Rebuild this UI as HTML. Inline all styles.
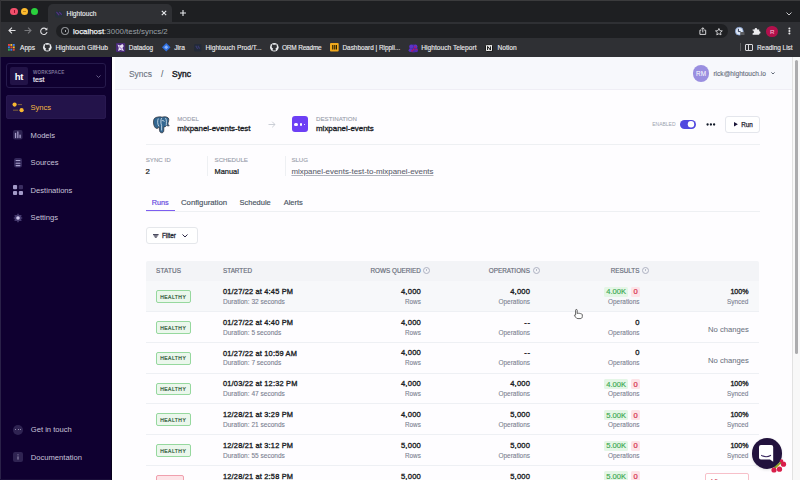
<!DOCTYPE html>
<html><head><meta charset="utf-8">
<style>
*{box-sizing:border-box;margin:0;padding:0}
html,body{width:800px;height:480px;overflow:hidden;background:#fff;font-family:"Liberation Sans",sans-serif}
.a{position:absolute;white-space:nowrap}
svg.a{overflow:visible}
</style></head><body>
<div class="a" style="left:0.00px;top:0.00px;width:800.00px;height:57.00px;background:#2f3034;"></div>
<div class="a" style="left:0.00px;top:0.00px;width:800.00px;height:22.00px;background:#1e1f22;"></div>
<div class="a" style="left:0.00px;top:0.00px;width:800.00px;height:1.00px;background:#3b3b3d;"></div>
<div class="a" style="left:0.00px;top:0.00px;width:1.00px;height:57.00px;background:#333336;"></div>
<div class="a" style="left:10.40px;top:7.70px;width:7.4px;height:7.4px;border-radius:50%;background:#f14f6b"></div>
<div class="a" style="left:20.60px;top:7.70px;width:7.4px;height:7.4px;border-radius:50%;background:#fdbb2e"></div>
<div class="a" style="left:30.70px;top:7.70px;width:7.4px;height:7.4px;border-radius:50%;background:#2ad13d"></div>
<div class="a" style="left:13.50px;top:9.60px;width:1.10px;height:3.80px;background:#9a1030;"></div>
<div class="a" style="left:22.90px;top:11.00px;width:2.80px;height:0.90px;background:#9a6010;opacity:.6"></div>
<div class="a" style="left:48.00px;top:4.00px;width:124.00px;height:18.00px;background:#2f3034;border-radius:5px 5px 0 0"></div>
<svg class="a" style="left:54.70px;top:10.80px;" width="8" height="6.4" viewBox="0 0 8 6.4"><rect width="8" height="6.4" rx="2" fill="#25303a"/><path d="M1.8 1.3 L3.9 3.9 M4.6 1.3 L6.4 3.4" stroke="#56308a" stroke-width="1.1" stroke-linecap="round"/></svg>
<div class="a" style="top:10.00px;font-size:6.65px;line-height:7.98px;color:#eceef0;-webkit-text-stroke:0.12px #eceef0;left:66.60px;">Hightouch</div>
<svg class="a" style="left:160.50px;top:10.10px;" width="6" height="6" viewBox="0 0 6 6"><path d="M0.8 0.8 L5.2 5.2 M5.2 0.8 L0.8 5.2" stroke="#e8eaed" stroke-width="1.1"/></svg>
<svg class="a" style="left:179.60px;top:10.00px;" width="6" height="6" viewBox="0 0 6 6"><path d="M3 0 V6 M0 3 H6" stroke="#e8eaed" stroke-width="1.1"/></svg>
<svg class="a" style="left:786.00px;top:11.50px;" width="6" height="4" viewBox="0 0 6 4"><path d="M0.5 0.5 L3 3 L5.5 0.5" stroke="#c8c8cc" stroke-width="1" fill="none"/></svg>
<svg class="a" style="left:7.50px;top:27.00px;" width="8" height="7" viewBox="0 0 8 7"><path d="M7.5 3.5 H1 M4 0.6 L1 3.5 L4 6.4" stroke="#e0e0e3" stroke-width="1.1" fill="none"/></svg>
<svg class="a" style="left:24.00px;top:27.00px;" width="8" height="7" viewBox="0 0 8 7"><path d="M0.5 3.5 H7 M4 0.6 L7 3.5 L4 6.4" stroke="#77787c" stroke-width="1.1" fill="none"/></svg>
<svg class="a" style="left:40.00px;top:26.50px;" width="8" height="8" viewBox="0 0 8 8"><path d="M6.6 2.6 A3.2 3.2 0 1 0 7 5" stroke="#e0e0e3" stroke-width="1.1" fill="none"/><path d="M7.4 0.6 V3.2 H4.8 Z" fill="#e0e0e3"/></svg>
<div class="a" style="left:56.00px;top:23.80px;width:672.00px;height:13.90px;background:#1e1f22;border-radius:7px"></div>
<div class="a" style="left:61.4px;top:27.4px;width:7.2px;height:7.2px;border:0.9px solid #a9acb1;border-radius:50%"></div>
<div class="a" style="left:64.55px;top:29.90px;width:0.90px;height:2.60px;background:#a9acb1;"></div>
<div class="a" style="top:27.00px;font-size:7.9px;line-height:9.48px;color:#eef0f2;-webkit-text-stroke:0.25px #eef0f2;left:73.00px;">localhost<span style="color:#9aa0a6;-webkit-text-stroke:0">:3000/test/syncs/2</span></div>
<svg class="a" style="left:699.00px;top:27.30px;" width="7.6" height="8" viewBox="0 0 7.6 8"><path d="M2.3 3.2 H0.9 V7.4 H6.7 V3.2 H5.3 M3.8 5.4 V0.9 M2.2 2.3 L3.8 0.7 L5.4 2.3" stroke="#d4d4d7" stroke-width="1" fill="none"/></svg>
<svg class="a" style="left:714.80px;top:27.50px;" width="7.8" height="7.4" viewBox="0 0 7.8 7.4"><path d="M3.9 0.5 L4.9 2.7 L7.3 2.9 L5.5 4.5 L6 6.9 L3.9 5.7 L1.8 6.9 L2.3 4.5 L0.5 2.9 L2.9 2.7 Z" stroke="#d4d4d7" stroke-width="0.95" fill="none" stroke-linejoin="round"/></svg>
<svg class="a" style="left:735.00px;top:27.00px;" width="10" height="8.5" viewBox="0 0 10 8.5"><circle cx="4.3" cy="4.2" r="3.9" fill="#dfe8f5" stroke="#7d9bd0" stroke-width="0.8"/><path d="M3.4 1.8 V4.6 H5.6" stroke="#2e3a55" stroke-width="1" fill="none"/><rect x="5.2" y="5" width="4.3" height="3" rx="0.6" fill="#5b5c60"/></svg>
<svg class="a" style="left:751.60px;top:26.80px;" width="9" height="8" viewBox="0 0 9 8"><path d="M0.6 2.4 H2.6 A1.3 1.3 0 1 1 5.2 2.4 H7.2 V4.2 A1.3 1.3 0 1 1 7.2 6.8 V7.8 H0.6 V6.2 A1.3 1.3 0 1 0 0.6 3.6 Z" fill="#ececef"/></svg>
<div class="a" style="left:766.3px;top:25.5px;width:11.8px;height:11.8px;border-radius:50%;background:#b3104c"></div>
<div class="a" style="top:28.00px;font-size:6.2px;line-height:7.44px;color:#f2b6cc;-webkit-text-stroke:0.1px #f2b6cc;left:572.20px;width:400px;text-align:center;">R</div>
<svg class="a" style="left:787.50px;top:27.00px;" width="3" height="8" viewBox="0 0 3 8"><circle cx="1.4" cy="1.5" r="1.05" fill="#e8e8ea"/><circle cx="1.4" cy="4" r="1.05" fill="#e8e8ea"/><circle cx="1.4" cy="6.5" r="1.05" fill="#e8e8ea"/></svg>
<svg class="a" style="left:8.00px;top:44.00px;" width="7" height="7" viewBox="0 0 7 7"><rect x="0.0" y="0.0" width="1.9" height="1.9" fill="#e8453c"/><rect x="2.4" y="0.0" width="1.9" height="1.9" fill="#f9bb2d"/><rect x="4.8" y="0.0" width="1.9" height="1.9" fill="#3b7ded"/><rect x="0.0" y="2.4" width="1.9" height="1.9" fill="#3b7ded"/><rect x="2.4" y="2.4" width="1.9" height="1.9" fill="#e8453c"/><rect x="4.8" y="2.4" width="1.9" height="1.9" fill="#f9bb2d"/><rect x="0.0" y="4.8" width="1.9" height="1.9" fill="#34a853"/><rect x="2.4" y="4.8" width="1.9" height="1.9" fill="#3b7ded"/><rect x="4.8" y="4.8" width="1.9" height="1.9" fill="#e8453c"/></svg>
<div class="a" style="top:44.00px;font-size:6.6px;line-height:7.92px;color:#ececee;-webkit-text-stroke:0.12px #ececee;left:20.00px;">Apps</div>
<svg class="a" style="left:43.20px;top:43.20px;" width="8.6" height="8.6" viewBox="0 0 8.6 8.6"><circle cx="4.3" cy="4.3" r="4.3" fill="#e8eaed"/><path d="M2.6 7.6 C2.6 6 3 5.6 3.3 5.4 C2 5.2 1.7 4.4 1.7 3.5 C1.7 3 1.9 2.6 2.1 2.3 C2 2 2 1.6 2.2 1.3 C2.6 1.3 3 1.6 3.3 1.8 C3.9 1.6 4.7 1.6 5.3 1.8 C5.6 1.6 6 1.3 6.4 1.3 C6.6 1.6 6.6 2 6.5 2.3 C6.7 2.6 6.9 3 6.9 3.5 C6.9 4.4 6.6 5.2 5.3 5.4 C5.6 5.6 5.9 6 5.9 7.6 Z" fill="#2f3034"/></svg>
<div class="a" style="top:44.00px;font-size:6.65px;line-height:7.98px;color:#ececee;-webkit-text-stroke:0.12px #ececee;left:55.50px;">Hightouch GitHub</div>
<svg class="a" style="left:115.80px;top:43.00px;" width="9.2" height="9" viewBox="0 0 9.2 9"><rect x="0" y="0" width="9.2" height="9" rx="1" fill="#4a2a7a"/><path d="M1.5 1.5 L4 2.5 L6.5 1 L7.8 3 L6.5 5 L8 8 L4.5 7 L2 8 L2.8 5 Z" fill="#e8e0f5"/><path d="M3 3.5 L6 6.5" stroke="#8050c0" stroke-width="0.9"/></svg>
<div class="a" style="top:44.00px;font-size:6.45px;line-height:7.74px;color:#ececee;-webkit-text-stroke:0.12px #ececee;left:128.75px;">Datadog</div>
<svg class="a" style="left:162.00px;top:43.30px;" width="8.5" height="8.5" viewBox="0 0 8.5 8.5"><path d="M4.25 0 L8.5 4.25 L4.25 8.5 L0 4.25 Z" fill="#2f6fe0"/><path d="M4.25 2.2 L6.3 4.25 L4.25 6.3 L2.2 4.25 Z" fill="#8fb4f5"/></svg>
<div class="a" style="top:44.00px;font-size:6.65px;line-height:7.98px;color:#ececee;-webkit-text-stroke:0.12px #ececee;left:174.25px;">Jira</div>
<svg class="a" style="left:193.75px;top:43.50px;" width="7.5" height="8" viewBox="0 0 7.5 8"><rect width="7.5" height="7.5" rx="1.5" fill="#232a38"/><path d="M1.8 1.8 L3.6 5 M3.9 1.8 L5.6 4.6" stroke="#3a3a70" stroke-width="1.1"/></svg>
<div class="a" style="top:44.00px;font-size:6.6px;line-height:7.92px;color:#ececee;-webkit-text-stroke:0.12px #ececee;left:205.50px;">Hightouch Prod/T...</div>
<svg class="a" style="left:270.00px;top:43.20px;" width="8.6" height="8.6" viewBox="0 0 8.6 8.6"><circle cx="4.3" cy="4.3" r="4.3" fill="#e8eaed"/><path d="M2.6 7.6 C2.6 6 3 5.6 3.3 5.4 C2 5.2 1.7 4.4 1.7 3.5 C1.7 3 1.9 2.6 2.1 2.3 C2 2 2 1.6 2.2 1.3 C2.6 1.3 3 1.6 3.3 1.8 C3.9 1.6 4.7 1.6 5.3 1.8 C5.6 1.6 6 1.3 6.4 1.3 C6.6 1.6 6.6 2 6.5 2.3 C6.7 2.6 6.9 3 6.9 3.5 C6.9 4.4 6.6 5.2 5.3 5.4 C5.6 5.6 5.9 6 5.9 7.6 Z" fill="#2f3034"/></svg>
<div class="a" style="top:44.00px;font-size:6.5px;line-height:7.8px;color:#ececee;letter-spacing:-0.2px;-webkit-text-stroke:0.12px #ececee;left:282.00px;">ORM Readme</div>
<svg class="a" style="left:330.00px;top:43.30px;" width="8.7" height="8.5" viewBox="0 0 8.7 8.5"><rect width="8.7" height="8.5" rx="1" fill="#f0a81c"/><rect x="2.2" y="2" width="1.2" height="4.5" fill="#2b2000"/><rect x="4.2" y="2" width="1.2" height="4.5" fill="#2b2000"/><rect x="6" y="2" width="1" height="4.5" fill="#2b2000"/></svg>
<div class="a" style="top:44.00px;font-size:6.4px;line-height:7.68px;color:#ececee;-webkit-text-stroke:0.12px #ececee;left:342.50px;">Dashboard | Rippli...</div>
<svg class="a" style="left:408.00px;top:43.50px;" width="11" height="9" viewBox="0 0 11 9"><circle cx="5.5" cy="4.5" r="4" fill="#4b2aa8"/><circle cx="3.2" cy="2.6" r="2" fill="#5a34c8"/><circle cx="7.6" cy="2.4" r="1.8" fill="#5a34c8"/><circle cx="2.4" cy="6.2" r="1.8" fill="#5a34c8"/><circle cx="8.2" cy="6.4" r="1.8" fill="#4f2cb8"/><circle cx="7.2" cy="3.2" r="0.9" fill="#c0155a"/><circle cx="5.6" cy="5.5" r="0.9" fill="#c0155a"/><circle cx="8.5" cy="5.5" r="0.8" fill="#c0155a"/><circle cx="4" cy="6.8" r="0.9" fill="#c0155a"/></svg>
<div class="a" style="top:44.00px;font-size:6.65px;line-height:7.98px;color:#ececee;-webkit-text-stroke:0.12px #ececee;left:421.25px;">Hightouch Teleport</div>
<svg class="a" style="left:485.10px;top:43.80px;" width="8" height="8" viewBox="0 0 8 8"><path d="M1.2 0.8 L6.6 0.6 L7.5 1.6 V7.3 L1.6 7.5 L0.5 6.3 V1.6 Z" fill="#f2f2f2" stroke="#0a0a0a" stroke-width="0.9"/><path d="M2.6 6 V2.4 L5.4 6 V2.4" stroke="#111" stroke-width="1" fill="none"/></svg>
<div class="a" style="top:44.00px;font-size:6.65px;line-height:7.98px;color:#ececee;-webkit-text-stroke:0.12px #ececee;left:497.50px;">Notion</div>
<div class="a" style="left:739.50px;top:43.30px;width:1.00px;height:8.20px;background:#5a5b5e;"></div>
<div class="a" style="left:744.8px;top:44px;width:8.2px;height:7.4px;border:1px solid #d8d8db;border-radius:1px"></div>
<div class="a" style="left:748.40px;top:44.50px;width:1.00px;height:6.50px;background:#d8d8db;"></div>
<div class="a" style="top:44.00px;font-size:6.4px;line-height:7.68px;color:#ececee;-webkit-text-stroke:0.12px #ececee;left:757.00px;">Reading List</div>
<div class="a" style="left:0.00px;top:57.00px;width:112.00px;height:423.00px;background:#0f0030;"></div>
<div class="a" style="left:111.00px;top:57.00px;width:1.00px;height:423.00px;background:#07001c;"></div>
<div class="a" style="left:0.00px;top:57.00px;width:1.00px;height:423.00px;background:#2a2148;"></div>
<div class="a" style="left:0.00px;top:479.00px;width:111.00px;height:1.00px;background:#1a0e3a;"></div>
<div class="a" style="left:6.2px;top:63.2px;width:99.9px;height:25.2px;border:1px solid #261a4c;border-radius:3px"></div>
<div class="a" style="left:10.00px;top:67.00px;width:18.00px;height:18.00px;background:#221347;border-radius:2px"></div>
<div class="a" style="top:71.00px;font-size:9.5px;line-height:11.4px;color:#ffffff;font-weight:700;letter-spacing:-0.3px;left:-181.00px;width:400px;text-align:center;">ht</div>
<div class="a" style="top:70.00px;font-size:4.6px;line-height:5.52px;color:#7a7196;font-weight:700;letter-spacing:0.15px;left:33.00px;">WORKSPACE</div>
<div class="a" style="top:76.00px;font-size:7.2px;line-height:8.64px;color:#f2f0f7;-webkit-text-stroke:0.15px #f2f0f7;left:33.00px;">test</div>
<svg class="a" style="left:95.50px;top:75.00px;" width="5" height="3" viewBox="0 0 5 3"><path d="M0.5 0.5 L2.5 2.5 L4.5 0.5" stroke="#6f6690" stroke-width="0.9" fill="none"/></svg>
<div class="a" style="left:6.40px;top:95.00px;width:99.70px;height:23.60px;background:#23134a;border-radius:3px;box-shadow:inset 0 0 0 0.8px #2b1b52"></div>
<svg class="a" style="left:12.00px;top:101.50px;" width="12" height="11" viewBox="0 0 12 11"><circle cx="2.6" cy="2.6" r="2.1" fill="#f7b731"/><circle cx="9.6" cy="8.2" r="2.1" fill="#f7b731"/><path d="M5.8 2.6 H10 M1 8.2 H6.2" stroke="#8a6a3a" stroke-width="0.9"/></svg>
<div class="a" style="top:103.00px;font-size:7.6px;line-height:9.12px;color:#f4b942;left:30.40px;">Syncs</div>
<svg class="a" style="left:13.20px;top:130.20px;" width="9.6" height="9.6" viewBox="0 0 9.6 9.6"><rect width="9.6" height="9.6" rx="2" fill="#2e2352"/><path d="M2.55 7.5 V3.3 M4.85 7.5 V1.9 M7.1 7.5 V5.1" stroke="#a59cc8" stroke-width="1.3" stroke-linecap="round"/></svg>
<div class="a" style="top:131.00px;font-size:7.6px;line-height:9.12px;color:#c9c4da;left:30.60px;">Models</div>
<svg class="a" style="left:14.00px;top:157.80px;" width="8" height="9.5" viewBox="0 0 8 9.5"><rect width="8" height="9.5" rx="2" fill="#33275a"/><path d="M2.1 2.5 H5.9 M2.1 5.2 H5.9 M2.1 7.6 H5.9" stroke="#a8a0cc" stroke-width="1.1" stroke-linecap="round"/></svg>
<div class="a" style="top:158.00px;font-size:7.6px;line-height:9.12px;color:#c9c4da;left:30.60px;">Sources</div>
<svg class="a" style="left:13.20px;top:185.00px;" width="10" height="10" viewBox="0 0 10 10"><rect x="0" y="0" width="4.1" height="4.2" rx="1" fill="#a39ac8"/><rect x="5.8" y="0" width="4.2" height="4.2" rx="1" fill="#3a2d60"/><rect x="0" y="6" width="4.1" height="4" rx="1" fill="#a39ac8"/><rect x="5.8" y="6" width="4.2" height="4" rx="1" fill="#a39ac8"/></svg>
<div class="a" style="top:186.00px;font-size:7.6px;line-height:9.12px;color:#c9c4da;left:30.60px;">Destinations</div>
<svg class="a" style="left:13.20px;top:212.80px;" width="10" height="10" viewBox="0 0 10 10"><path d="M5 0.3 L6.2 2 L8.6 1.9 L8.1 3.9 L9.8 5 L8.1 6.1 L8.6 8.1 L6.2 8 L5 9.7 L3.8 8 L1.4 8.1 L1.9 6.1 L0.2 5 L1.9 3.9 L1.4 1.9 L3.8 2 Z" fill="#43376c"/><circle cx="5" cy="5" r="1.8" fill="#cdc5ea"/></svg>
<div class="a" style="top:213.00px;font-size:7.6px;line-height:9.12px;color:#c9c4da;left:30.60px;">Settings</div>
<div class="a" style="left:13.2px;top:424.6px;width:10.2px;height:10.2px;border-radius:50%;background:#2f2352"></div>
<div class="a" style="left:15.35px;top:429.20px;width:1.10px;height:1.10px;background:#b3acc9;border-radius:50%"></div>
<div class="a" style="left:17.75px;top:429.20px;width:1.10px;height:1.10px;background:#b3acc9;border-radius:50%"></div>
<div class="a" style="left:20.15px;top:429.20px;width:1.10px;height:1.10px;background:#b3acc9;border-radius:50%"></div>
<div class="a" style="top:425.00px;font-size:7.6px;line-height:9.12px;color:#c9c4da;left:30.80px;">Get in touch</div>
<svg class="a" style="left:13.20px;top:452.40px;" width="10" height="10" viewBox="0 0 10 10"><rect width="10" height="10" rx="2" fill="#2f2352"/><path d="M5 4.4 V7.6" stroke="#9e97b8" stroke-width="1"/><circle cx="5" cy="2.8" r="0.6" fill="#9e97b8"/></svg>
<div class="a" style="top:453.00px;font-size:7.6px;line-height:9.12px;color:#c9c4da;left:30.80px;">Documentation</div>
<div class="a" style="left:112.00px;top:57.00px;width:680.50px;height:423.00px;background:#fefdff;"></div>
<div class="a" style="left:112.00px;top:57.00px;width:2.50px;height:423.00px;background:#ffffff;"></div>
<div class="a" style="left:114.50px;top:57.00px;width:678.00px;height:32.00px;background:#f7f8fc;"></div>
<div class="a" style="left:114.50px;top:89.00px;width:678.00px;height:1.20px;background:#efeef5;"></div>
<div class="a" style="top:69.00px;font-size:8.5px;line-height:10.2px;color:#6b7280;-webkit-text-stroke:0.1px #6b7280;left:128.90px;">Syncs</div>
<div class="a" style="top:69.00px;font-size:8.5px;line-height:10.2px;color:#4b5563;left:161.00px;">/</div>
<div class="a" style="top:69.00px;font-size:8.5px;line-height:10.2px;color:#1a1d26;-webkit-text-stroke:0.42px #1a1d26;left:172.00px;">Sync</div>
<div class="a" style="left:692.7px;top:65.2px;width:16.6px;height:16.6px;border-radius:50%;background:#9a8fe0"></div>
<div class="a" style="top:70.00px;font-size:6.4px;line-height:7.68px;color:#ffffff;left:501.00px;width:400px;text-align:center;">RM</div>
<div class="a" style="top:70.00px;font-size:6.6px;line-height:7.92px;color:#626977;-webkit-text-stroke:0.1px #626977;left:713.40px;">rick@hightouch.io</div>
<svg class="a" style="left:771.00px;top:72.00px;" width="4" height="2.6" viewBox="0 0 4 2.6"><path d="M0.4 0.4 L2 2 L3.6 0.4" stroke="#4b5563" stroke-width="0.9" fill="none"/></svg>
<svg class="a" style="left:152.50px;top:116.00px;" width="17" height="17.2" viewBox="0 0 17 17.2"><path d="M3 1.5 C1 2 0.3 4 0.5 7 C0.8 10 2 12.5 4 12.5 C5 12.5 5.5 11.5 6 10.5 L6.5 14.5 C6.7 16.3 8 17 9.2 16.8 C10.5 16.5 10.8 15.5 10.8 14 L10.8 11 C12 11 13 10.5 13.5 9.5 C14.3 9.8 15.5 10.2 16.3 9.6 C15 9 14.8 8 15.2 6.5 C16 4 16.3 2 14 1.2 C12 0.5 10 0.8 9 1.2 C7.5 0.6 5 0.8 3 1.5 Z" fill="#336791" stroke="#2b2b33" stroke-width="0.7"/><path d="M5.3 2.5 C4.2 5 4.5 8.5 6 10.5 M8.6 2 C7.6 4 7.6 7 8.6 9.5 L8.6 14.5 M12.5 2 C13.8 4 13.5 7 13.2 9.5 M8.6 5 C9.5 4.2 11 4.5 11.3 5.6" stroke="#e9f1f8" stroke-width="0.75" fill="none"/></svg>
<div class="a" style="top:116.00px;font-size:6.0px;line-height:7.2px;color:#9ba1ad;letter-spacing:0.05px;-webkit-text-stroke:0.12px #9ba1ad;left:177.30px;">MODEL</div>
<div class="a" style="top:124.00px;font-size:7.95px;line-height:9.54px;color:#1a1d26;-webkit-text-stroke:0.32px #1a1d26;left:177.30px;">mixpanel-events-test</div>
<svg class="a" style="left:267.60px;top:121.20px;" width="8" height="7" viewBox="0 0 8 7"><path d="M0.5 3.5 H7 M4.2 0.7 L7 3.5 L4.2 6.3" stroke="#c5c9d1" stroke-width="0.9" fill="none"/></svg>
<div class="a" style="left:291.70px;top:116.10px;width:16.50px;height:16.20px;background:#6d3ff5;border-radius:3px"></div>
<div class="a" style="left:294.3px;top:122.7px;width:3.6px;height:3.6px;border-radius:50%;background:#fff"></div>
<div class="a" style="left:299.7px;top:123.4px;width:2.4px;height:2.4px;border-radius:50%;background:#fff"></div>
<div class="a" style="left:304.10px;top:124.20px;width:1.40px;height:0.70px;background:#e8e0ff;"></div>
<div class="a" style="top:115.00px;font-size:6.1px;line-height:7.32px;color:#9ba1ad;letter-spacing:0.05px;-webkit-text-stroke:0.12px #9ba1ad;left:316.00px;">DESTINATION</div>
<div class="a" style="top:124.00px;font-size:7.95px;line-height:9.54px;color:#1a1d26;-webkit-text-stroke:0.32px #1a1d26;left:316.00px;">mixpanel-events</div>
<div class="a" style="top:121.00px;font-size:5.0px;line-height:6.0px;color:#9ca3af;left:652.20px;">ENABLED</div>
<div class="a" style="left:679.85px;top:119.90px;width:16.25px;height:9.00px;background:#5148df;border-radius:4.5px"></div>
<svg class="a" style="left:676.00px;top:116.00px;" width="44" height="18" viewBox="0 0 44 18"><circle cx="15" cy="8.3" r="3.2" fill="#fff"/><circle cx="31.6" cy="8.5" r="1.15" fill="#111827"/><circle cx="34.9" cy="8.5" r="1.15" fill="#111827"/><circle cx="38.1" cy="8.5" r="1.15" fill="#111827"/></svg>
<div class="a" style="left:725px;top:116.2px;width:34.8px;height:16.4px;border:0.8px solid #e4e6ec;border-radius:3px;background:#fff"></div>
<svg class="a" style="left:734.10px;top:122.30px;" width="3.9" height="4.4" viewBox="0 0 3.9 4.4"><path d="M0 0 L3.9 2.2 L0 4.4 Z" fill="#1a1538"/></svg>
<div class="a" style="top:121.00px;font-size:6.3px;line-height:7.56px;color:#1f2430;-webkit-text-stroke:0.25px #1f2430;left:741.20px;">Run</div>
<div class="a" style="left:146.00px;top:144.30px;width:614.00px;height:1.00px;background:#eef0f3;"></div>
<div class="a" style="top:156.00px;font-size:6.2px;line-height:7.44px;color:#9ba1ad;letter-spacing:-0.05px;-webkit-text-stroke:0.12px #9ba1ad;left:145.80px;">SYNC ID</div>
<div class="a" style="top:167.00px;font-size:7.8px;line-height:9.36px;color:#1a1d26;-webkit-text-stroke:0.24px #1a1d26;left:145.60px;">2</div>
<div class="a" style="left:207.30px;top:156.00px;width:1.00px;height:20.00px;background:#eef0f3;"></div>
<div class="a" style="top:156.00px;font-size:6.2px;line-height:7.44px;color:#9ba1ad;letter-spacing:-0.05px;-webkit-text-stroke:0.12px #9ba1ad;left:214.60px;">SCHEDULE</div>
<div class="a" style="top:168.00px;font-size:7.4px;line-height:8.88px;color:#1a1d26;-webkit-text-stroke:0.24px #1a1d26;left:214.60px;">Manual</div>
<div class="a" style="left:285.00px;top:156.00px;width:1.00px;height:20.00px;background:#eef0f3;"></div>
<div class="a" style="top:156.00px;font-size:6.2px;line-height:7.44px;color:#9ba1ad;letter-spacing:-0.05px;-webkit-text-stroke:0.12px #9ba1ad;left:291.40px;">SLUG</div>
<div class="a" style="top:167.00px;font-size:7.9px;line-height:9.48px;color:#5b606c;-webkit-text-stroke:0.08px #5b606c;left:291.40px;text-decoration:underline;text-decoration-color:#b0b4bd">mixpanel-events-test-to-mixpanel-events</div>
<div class="a" style="top:199.00px;font-size:7.3px;line-height:8.76px;color:#6548e0;-webkit-text-stroke:0.18px #6548e0;left:151.70px;">Runs</div>
<div class="a" style="top:198.00px;font-size:7.75px;line-height:9.3px;color:#4b5563;-webkit-text-stroke:0.16px #4b5563;left:181.00px;">Configuration</div>
<div class="a" style="top:198.00px;font-size:7.5px;line-height:9.0px;color:#4b5563;-webkit-text-stroke:0.16px #4b5563;left:239.50px;">Schedule</div>
<div class="a" style="top:198.00px;font-size:7.5px;line-height:9.0px;color:#4b5563;-webkit-text-stroke:0.16px #4b5563;left:283.70px;">Alerts</div>
<div class="a" style="left:146.00px;top:210.50px;width:614.00px;height:1.00px;background:#eef0f3;"></div>
<div class="a" style="left:146.00px;top:209.60px;width:29.00px;height:1.80px;background:#7d5ef0;"></div>
<div class="a" style="left:146px;top:227.3px;width:52px;height:16.8px;border:1px solid #e5e7eb;border-radius:3px;background:#fff"></div>
<svg class="a" style="left:153.20px;top:234.00px;" width="5.6" height="4.4" viewBox="0 0 5.6 4.4"><path d="M0 0.6 H5.6 M0.9 2 H4.7 M1.8 3.3 H3.8" stroke="#4a4a5e" stroke-width="1.1"/></svg>
<div class="a" style="top:232.00px;font-size:6.3px;line-height:7.56px;color:#262a35;-webkit-text-stroke:0.28px #262a35;left:161.90px;">Filter</div>
<svg class="a" style="left:182.20px;top:234.20px;" width="6" height="3.6" viewBox="0 0 6 3.6"><path d="M0.5 0.5 L3 3 L5.5 0.5" stroke="#262240" stroke-width="1" fill="none"/></svg>
<div class="a" style="left:145.60px;top:260.50px;width:613.90px;height:20.25px;background:#f3f4f7;border-radius:2px 2px 0 0"></div>
<div class="a" style="top:267.00px;font-size:6.4px;line-height:7.68px;color:#6a6f7c;letter-spacing:0.14px;-webkit-text-stroke:0.18px #6a6f7c;left:156.00px;">STATUS</div>
<div class="a" style="top:267.00px;font-size:6.35px;line-height:7.62px;color:#6a6f7c;-webkit-text-stroke:0.18px #6a6f7c;left:223.00px;">STARTED</div>
<div class="a" style="top:267.00px;font-size:6.35px;line-height:7.62px;color:#6a6f7c;-webkit-text-stroke:0.18px #6a6f7c;left:370.50px;">ROWS QUERIED</div>
<div class="a" style="left:423.20px;top:267.00px;width:7px;height:7px;border:0.7px solid #aeb2c2;border-radius:50%"></div>
<div class="a" style="left:426.35px;top:269.30px;width:0.70px;height:2.00px;background:#b8bccb;"></div>
<div class="a" style="top:267.00px;font-size:6.35px;line-height:7.62px;color:#6a6f7c;-webkit-text-stroke:0.18px #6a6f7c;left:488.75px;">OPERATIONS</div>
<div class="a" style="left:532.60px;top:267.00px;width:7px;height:7px;border:0.7px solid #aeb2c2;border-radius:50%"></div>
<div class="a" style="left:535.75px;top:269.30px;width:0.70px;height:2.00px;background:#b8bccb;"></div>
<div class="a" style="top:267.00px;font-size:6.3px;line-height:7.56px;color:#6a6f7c;-webkit-text-stroke:0.18px #6a6f7c;left:610.75px;">RESULTS</div>
<div class="a" style="left:641.80px;top:267.00px;width:7px;height:7px;border:0.7px solid #aeb2c2;border-radius:50%"></div>
<div class="a" style="left:644.95px;top:269.30px;width:0.70px;height:2.00px;background:#b8bccb;"></div>
<div class="a" style="left:145.60px;top:280.75px;width:613.90px;height:30.80px;background:#f7f8fa;"></div>
<div class="a" style="left:145.60px;top:311.05px;width:613.90px;height:1.00px;background:#eef0f4;"></div>
<div class="a" style="left:156px;top:290.15px;width:34.6px;height:12.8px;border:0.8px solid #96d89e;border-radius:2px;background:#ebf7ec"></div>
<div class="a" style="top:294.00px;font-size:5.0px;line-height:6.0px;color:#355f3d;letter-spacing:0.47px;-webkit-text-stroke:0.22px #355f3d;left:-26.80px;width:400px;text-align:center;">HEALTHY</div>
<div class="a" style="top:288.00px;font-size:7.4px;line-height:8.88px;color:#1c1f26;letter-spacing:0.19px;-webkit-text-stroke:0.34px #1c1f26;left:223.00px;">01/27/22 at 4:45 PM</div>
<div class="a" style="top:298.00px;font-size:6.55px;line-height:7.86px;color:#7b8191;-webkit-text-stroke:0.1px #7b8191;left:223.00px;">Duration: 32 seconds</div>
<div class="a" style="top:287.00px;font-size:7.6px;line-height:9.12px;color:#1c1f26;letter-spacing:0.22px;-webkit-text-stroke:0.34px #1c1f26;right:378.98px;">4,000</div>
<div class="a" style="top:298.00px;font-size:6.3px;line-height:7.56px;color:#7b8191;-webkit-text-stroke:0.1px #7b8191;right:379.20px;">Rows</div>
<div class="a" style="top:287.00px;font-size:7.6px;line-height:9.12px;color:#1c1f26;letter-spacing:0.22px;-webkit-text-stroke:0.34px #1c1f26;right:269.78px;">4,000</div>
<div class="a" style="top:298.00px;font-size:6.45px;line-height:7.74px;color:#7b8191;-webkit-text-stroke:0.1px #7b8191;right:270.00px;">Operations</div>
<div class="a" style="left:604.40px;top:286.60px;width:23.60px;height:10.15px;background:#e4f6e6;border-radius:1.5px"></div>
<div class="a" style="top:287.00px;font-size:7.6px;line-height:9.12px;color:#3aa84e;-webkit-text-stroke:0.15px #3aa84e;left:416.20px;width:400px;text-align:center;">4.00K</div>
<div class="a" style="left:631.40px;top:286.60px;width:8.20px;height:10.15px;background:#fde3e7;border-radius:1.5px"></div>
<div class="a" style="top:287.00px;font-size:7.6px;line-height:9.12px;color:#d42a4a;-webkit-text-stroke:0.2px #d42a4a;left:435.50px;width:400px;text-align:center;">0</div>
<div class="a" style="top:298.00px;font-size:6.45px;line-height:7.74px;color:#7b8191;-webkit-text-stroke:0.1px #7b8191;right:160.50px;">Operations</div>
<div class="a" style="top:288.00px;font-size:7.05px;line-height:8.46px;color:#1c1f26;-webkit-text-stroke:0.34px #1c1f26;right:51.60px;">100%</div>
<div class="a" style="top:298.00px;font-size:6.4px;line-height:7.68px;color:#7b8191;-webkit-text-stroke:0.1px #7b8191;right:51.60px;">Synced</div>
<div class="a" style="left:145.60px;top:341.85px;width:613.90px;height:1.00px;background:#eef0f4;"></div>
<div class="a" style="left:156px;top:320.95px;width:34.6px;height:12.8px;border:0.8px solid #96d89e;border-radius:2px;background:#ebf7ec"></div>
<div class="a" style="top:325.00px;font-size:5.0px;line-height:6.0px;color:#355f3d;letter-spacing:0.47px;-webkit-text-stroke:0.22px #355f3d;left:-26.80px;width:400px;text-align:center;">HEALTHY</div>
<div class="a" style="top:319.00px;font-size:7.4px;line-height:8.88px;color:#1c1f26;letter-spacing:0.19px;-webkit-text-stroke:0.34px #1c1f26;left:223.00px;">01/27/22 at 4:40 PM</div>
<div class="a" style="top:329.00px;font-size:6.55px;line-height:7.86px;color:#7b8191;-webkit-text-stroke:0.1px #7b8191;left:223.00px;">Duration: 5 seconds</div>
<div class="a" style="top:318.00px;font-size:7.6px;line-height:9.12px;color:#1c1f26;letter-spacing:0.22px;-webkit-text-stroke:0.34px #1c1f26;right:378.98px;">4,000</div>
<div class="a" style="top:329.00px;font-size:6.3px;line-height:7.56px;color:#7b8191;-webkit-text-stroke:0.1px #7b8191;right:379.20px;">Rows</div>
<div class="a" style="top:318.00px;font-size:7.6px;line-height:9.12px;color:#1c1f26;letter-spacing:0.8px;-webkit-text-stroke:0.34px #1c1f26;right:269.20px;">--</div>
<div class="a" style="top:329.00px;font-size:6.45px;line-height:7.74px;color:#7b8191;-webkit-text-stroke:0.1px #7b8191;right:270.00px;">Operations</div>
<div class="a" style="top:318.00px;font-size:7.6px;line-height:9.12px;color:#1c1f26;-webkit-text-stroke:0.34px #1c1f26;right:160.60px;">0</div>
<div class="a" style="top:329.00px;font-size:6.45px;line-height:7.74px;color:#7b8191;-webkit-text-stroke:0.1px #7b8191;right:160.50px;">Operations</div>
<div class="a" style="top:325.00px;font-size:7.65px;line-height:9.18px;color:#6b7280;-webkit-text-stroke:0.05px #6b7280;right:51.20px;">No changes</div>
<div class="a" style="left:145.60px;top:372.65px;width:613.90px;height:1.00px;background:#eef0f4;"></div>
<div class="a" style="left:156px;top:351.75px;width:34.6px;height:12.8px;border:0.8px solid #96d89e;border-radius:2px;background:#ebf7ec"></div>
<div class="a" style="top:355.00px;font-size:5.0px;line-height:6.0px;color:#355f3d;letter-spacing:0.47px;-webkit-text-stroke:0.22px #355f3d;left:-26.80px;width:400px;text-align:center;">HEALTHY</div>
<div class="a" style="top:350.00px;font-size:7.4px;line-height:8.88px;color:#1c1f26;letter-spacing:0.19px;-webkit-text-stroke:0.34px #1c1f26;left:223.00px;">01/27/22 at 10:59 AM</div>
<div class="a" style="top:359.00px;font-size:6.55px;line-height:7.86px;color:#7b8191;-webkit-text-stroke:0.1px #7b8191;left:223.00px;">Duration: 7 seconds</div>
<div class="a" style="top:348.00px;font-size:7.6px;line-height:9.12px;color:#1c1f26;letter-spacing:0.22px;-webkit-text-stroke:0.34px #1c1f26;right:378.98px;">4,000</div>
<div class="a" style="top:359.00px;font-size:6.3px;line-height:7.56px;color:#7b8191;-webkit-text-stroke:0.1px #7b8191;right:379.20px;">Rows</div>
<div class="a" style="top:348.00px;font-size:7.6px;line-height:9.12px;color:#1c1f26;letter-spacing:0.8px;-webkit-text-stroke:0.34px #1c1f26;right:269.20px;">--</div>
<div class="a" style="top:359.00px;font-size:6.45px;line-height:7.74px;color:#7b8191;-webkit-text-stroke:0.1px #7b8191;right:270.00px;">Operations</div>
<div class="a" style="top:348.00px;font-size:7.6px;line-height:9.12px;color:#1c1f26;-webkit-text-stroke:0.34px #1c1f26;right:160.60px;">0</div>
<div class="a" style="top:359.00px;font-size:6.45px;line-height:7.74px;color:#7b8191;-webkit-text-stroke:0.1px #7b8191;right:160.50px;">Operations</div>
<div class="a" style="top:356.00px;font-size:7.65px;line-height:9.18px;color:#6b7280;-webkit-text-stroke:0.05px #6b7280;right:51.20px;">No changes</div>
<div class="a" style="left:145.60px;top:403.45px;width:613.90px;height:1.00px;background:#eef0f4;"></div>
<div class="a" style="left:156px;top:382.55px;width:34.6px;height:12.8px;border:0.8px solid #96d89e;border-radius:2px;background:#ebf7ec"></div>
<div class="a" style="top:386.00px;font-size:5.0px;line-height:6.0px;color:#355f3d;letter-spacing:0.47px;-webkit-text-stroke:0.22px #355f3d;left:-26.80px;width:400px;text-align:center;">HEALTHY</div>
<div class="a" style="top:380.00px;font-size:7.4px;line-height:8.88px;color:#1c1f26;letter-spacing:0.19px;-webkit-text-stroke:0.34px #1c1f26;left:223.00px;">01/03/22 at 12:32 PM</div>
<div class="a" style="top:390.00px;font-size:6.55px;line-height:7.86px;color:#7b8191;-webkit-text-stroke:0.1px #7b8191;left:223.00px;">Duration: 47 seconds</div>
<div class="a" style="top:379.00px;font-size:7.6px;line-height:9.12px;color:#1c1f26;letter-spacing:0.22px;-webkit-text-stroke:0.34px #1c1f26;right:378.98px;">4,000</div>
<div class="a" style="top:390.00px;font-size:6.3px;line-height:7.56px;color:#7b8191;-webkit-text-stroke:0.1px #7b8191;right:379.20px;">Rows</div>
<div class="a" style="top:379.00px;font-size:7.6px;line-height:9.12px;color:#1c1f26;letter-spacing:0.22px;-webkit-text-stroke:0.34px #1c1f26;right:269.78px;">4,000</div>
<div class="a" style="top:390.00px;font-size:6.45px;line-height:7.74px;color:#7b8191;-webkit-text-stroke:0.1px #7b8191;right:270.00px;">Operations</div>
<div class="a" style="left:604.40px;top:379.00px;width:23.60px;height:10.15px;background:#e4f6e6;border-radius:1.5px"></div>
<div class="a" style="top:380.00px;font-size:7.6px;line-height:9.12px;color:#3aa84e;-webkit-text-stroke:0.15px #3aa84e;left:416.20px;width:400px;text-align:center;">4.00K</div>
<div class="a" style="left:631.40px;top:379.00px;width:8.20px;height:10.15px;background:#fde3e7;border-radius:1.5px"></div>
<div class="a" style="top:380.00px;font-size:7.6px;line-height:9.12px;color:#d42a4a;-webkit-text-stroke:0.2px #d42a4a;left:435.50px;width:400px;text-align:center;">0</div>
<div class="a" style="top:390.00px;font-size:6.45px;line-height:7.74px;color:#7b8191;-webkit-text-stroke:0.1px #7b8191;right:160.50px;">Operations</div>
<div class="a" style="top:380.00px;font-size:7.05px;line-height:8.46px;color:#1c1f26;-webkit-text-stroke:0.34px #1c1f26;right:51.60px;">100%</div>
<div class="a" style="top:390.00px;font-size:6.4px;line-height:7.68px;color:#7b8191;-webkit-text-stroke:0.1px #7b8191;right:51.60px;">Synced</div>
<div class="a" style="left:145.60px;top:434.25px;width:613.90px;height:1.00px;background:#eef0f4;"></div>
<div class="a" style="left:156px;top:413.35px;width:34.6px;height:12.8px;border:0.8px solid #96d89e;border-radius:2px;background:#ebf7ec"></div>
<div class="a" style="top:417.00px;font-size:5.0px;line-height:6.0px;color:#355f3d;letter-spacing:0.47px;-webkit-text-stroke:0.22px #355f3d;left:-26.80px;width:400px;text-align:center;">HEALTHY</div>
<div class="a" style="top:411.00px;font-size:7.4px;line-height:8.88px;color:#1c1f26;letter-spacing:0.19px;-webkit-text-stroke:0.34px #1c1f26;left:223.00px;">12/28/21 at 3:29 PM</div>
<div class="a" style="top:421.00px;font-size:6.55px;line-height:7.86px;color:#7b8191;-webkit-text-stroke:0.1px #7b8191;left:223.00px;">Duration: 21 seconds</div>
<div class="a" style="top:410.00px;font-size:7.6px;line-height:9.12px;color:#1c1f26;letter-spacing:0.22px;-webkit-text-stroke:0.34px #1c1f26;right:378.98px;">4,000</div>
<div class="a" style="top:421.00px;font-size:6.3px;line-height:7.56px;color:#7b8191;-webkit-text-stroke:0.1px #7b8191;right:379.20px;">Rows</div>
<div class="a" style="top:410.00px;font-size:7.6px;line-height:9.12px;color:#1c1f26;letter-spacing:0.22px;-webkit-text-stroke:0.34px #1c1f26;right:269.78px;">5,000</div>
<div class="a" style="top:421.00px;font-size:6.45px;line-height:7.74px;color:#7b8191;-webkit-text-stroke:0.1px #7b8191;right:270.00px;">Operations</div>
<div class="a" style="left:604.40px;top:409.80px;width:23.60px;height:10.15px;background:#e4f6e6;border-radius:1.5px"></div>
<div class="a" style="top:411.00px;font-size:7.6px;line-height:9.12px;color:#3aa84e;-webkit-text-stroke:0.15px #3aa84e;left:416.20px;width:400px;text-align:center;">5.00K</div>
<div class="a" style="left:631.40px;top:409.80px;width:8.20px;height:10.15px;background:#fde3e7;border-radius:1.5px"></div>
<div class="a" style="top:411.00px;font-size:7.6px;line-height:9.12px;color:#d42a4a;-webkit-text-stroke:0.2px #d42a4a;left:435.50px;width:400px;text-align:center;">0</div>
<div class="a" style="top:421.00px;font-size:6.45px;line-height:7.74px;color:#7b8191;-webkit-text-stroke:0.1px #7b8191;right:160.50px;">Operations</div>
<div class="a" style="top:411.00px;font-size:7.05px;line-height:8.46px;color:#1c1f26;-webkit-text-stroke:0.34px #1c1f26;right:51.60px;">100%</div>
<div class="a" style="top:421.00px;font-size:6.4px;line-height:7.68px;color:#7b8191;-webkit-text-stroke:0.1px #7b8191;right:51.60px;">Synced</div>
<div class="a" style="left:145.60px;top:465.05px;width:613.90px;height:1.00px;background:#eef0f4;"></div>
<div class="a" style="left:156px;top:444.15px;width:34.6px;height:12.8px;border:0.8px solid #96d89e;border-radius:2px;background:#ebf7ec"></div>
<div class="a" style="top:448.00px;font-size:5.0px;line-height:6.0px;color:#355f3d;letter-spacing:0.47px;-webkit-text-stroke:0.22px #355f3d;left:-26.80px;width:400px;text-align:center;">HEALTHY</div>
<div class="a" style="top:442.00px;font-size:7.4px;line-height:8.88px;color:#1c1f26;letter-spacing:0.19px;-webkit-text-stroke:0.34px #1c1f26;left:223.00px;">12/28/21 at 3:12 PM</div>
<div class="a" style="top:452.00px;font-size:6.55px;line-height:7.86px;color:#7b8191;-webkit-text-stroke:0.1px #7b8191;left:223.00px;">Duration: 55 seconds</div>
<div class="a" style="top:441.00px;font-size:7.6px;line-height:9.12px;color:#1c1f26;letter-spacing:0.22px;-webkit-text-stroke:0.34px #1c1f26;right:378.98px;">5,000</div>
<div class="a" style="top:452.00px;font-size:6.3px;line-height:7.56px;color:#7b8191;-webkit-text-stroke:0.1px #7b8191;right:379.20px;">Rows</div>
<div class="a" style="top:441.00px;font-size:7.6px;line-height:9.12px;color:#1c1f26;letter-spacing:0.22px;-webkit-text-stroke:0.34px #1c1f26;right:269.78px;">5,000</div>
<div class="a" style="top:452.00px;font-size:6.45px;line-height:7.74px;color:#7b8191;-webkit-text-stroke:0.1px #7b8191;right:270.00px;">Operations</div>
<div class="a" style="left:604.40px;top:440.60px;width:23.60px;height:10.15px;background:#e4f6e6;border-radius:1.5px"></div>
<div class="a" style="top:441.00px;font-size:7.6px;line-height:9.12px;color:#3aa84e;-webkit-text-stroke:0.15px #3aa84e;left:416.20px;width:400px;text-align:center;">5.00K</div>
<div class="a" style="left:631.40px;top:440.60px;width:8.20px;height:10.15px;background:#fde3e7;border-radius:1.5px"></div>
<div class="a" style="top:441.00px;font-size:7.6px;line-height:9.12px;color:#d42a4a;-webkit-text-stroke:0.2px #d42a4a;left:435.50px;width:400px;text-align:center;">0</div>
<div class="a" style="top:452.00px;font-size:6.45px;line-height:7.74px;color:#7b8191;-webkit-text-stroke:0.1px #7b8191;right:160.50px;">Operations</div>
<div class="a" style="top:442.00px;font-size:7.05px;line-height:8.46px;color:#1c1f26;-webkit-text-stroke:0.34px #1c1f26;right:51.60px;">100%</div>
<div class="a" style="top:452.00px;font-size:6.4px;line-height:7.68px;color:#7b8191;-webkit-text-stroke:0.1px #7b8191;right:51.60px;">Synced</div>
<div class="a" style="left:145.60px;top:495.85px;width:613.90px;height:1.00px;background:#eef0f4;"></div>
<div class="a" style="left:156px;top:474.95px;width:27.6px;height:12.8px;border:0.8px solid #f0a0ae;border-radius:2px;background:#fde4e8"></div>
<div class="a" style="top:473.00px;font-size:7.4px;line-height:8.88px;color:#1c1f26;letter-spacing:0.19px;-webkit-text-stroke:0.34px #1c1f26;left:223.00px;">12/28/21 at 2:58 PM</div>
<div class="a" style="top:472.00px;font-size:7.6px;line-height:9.12px;color:#1c1f26;letter-spacing:0.22px;-webkit-text-stroke:0.34px #1c1f26;right:378.98px;">5,000</div>
<div class="a" style="top:483.00px;font-size:6.3px;line-height:7.56px;color:#7b8191;-webkit-text-stroke:0.1px #7b8191;right:379.20px;">Rows</div>
<div class="a" style="top:472.00px;font-size:7.6px;line-height:9.12px;color:#1c1f26;letter-spacing:0.22px;-webkit-text-stroke:0.34px #1c1f26;right:269.78px;">5,000</div>
<div class="a" style="top:483.00px;font-size:6.45px;line-height:7.74px;color:#7b8191;-webkit-text-stroke:0.1px #7b8191;right:270.00px;">Operations</div>
<div class="a" style="left:604.40px;top:471.40px;width:23.60px;height:10.15px;background:#e4f6e6;border-radius:1.5px"></div>
<div class="a" style="top:472.00px;font-size:7.6px;line-height:9.12px;color:#3aa84e;-webkit-text-stroke:0.15px #3aa84e;left:416.20px;width:400px;text-align:center;">5.00K</div>
<div class="a" style="left:631.40px;top:471.40px;width:8.20px;height:10.15px;background:#fde3e7;border-radius:1.5px"></div>
<div class="a" style="top:472.00px;font-size:7.6px;line-height:9.12px;color:#d42a4a;-webkit-text-stroke:0.2px #d42a4a;left:435.50px;width:400px;text-align:center;">0</div>
<div class="a" style="top:483.00px;font-size:6.45px;line-height:7.74px;color:#7b8191;-webkit-text-stroke:0.1px #7b8191;right:160.50px;">Operations</div>
<div class="a" style="left:704.9px;top:472.95px;width:44.2px;height:16px;border:0.8px solid #f7c0c9;border-radius:2px;background:#fff"></div>
<div class="a" style="top:478.00px;font-size:7.3px;line-height:8.76px;color:#d2334f;-webkit-text-stroke:0.15px #d2334f;left:711.25px;">View</div>
<div class="a" style="left:792.30px;top:57.00px;width:7.70px;height:423.00px;background:#f8f8f8;border-left:0.8px solid #e2e2e2"></div>
<div class="a" style="left:794.90px;top:60.00px;width:3.60px;height:294.00px;background:#acacae;border-radius:1.8px"></div>
<svg class="a" style="left:574.00px;top:309.00px;" width="9" height="10" viewBox="0 0 9 10"><path d="M1.6 5.8 V1.3 A0.8 0.8 0 0 1 3.2 1.3 V4.6 C3.6 4.1 4.6 4.1 5 4.6 C5.5 4.1 6.5 4.3 6.8 4.9 C7.5 4.7 8.3 5.1 8.3 5.9 V7.6 C8.3 8.9 7.3 9.6 6.1 9.6 H3.9 C2.9 9.6 2.3 9.1 1.7 8.3 L0.5 6.7 C0.2 6.2 0.7 5.6 1.6 6.1 Z" fill="#fff" stroke="#3a3a3a" stroke-width="0.8" stroke-linejoin="round"/></svg>
<div class="a" style="left:751.5px;top:438px;width:30.8px;height:30.8px;border-radius:50%;background:#22123d;box-shadow:0 1px 3px rgba(0,0,0,.12)"></div>
<svg class="a" style="left:759.30px;top:445.20px;" width="14.2" height="16.8" viewBox="0 0 14.2 16.8"><path d="M2 0 H12.2 A2 2 0 0 1 14.2 2 V16.8 L11 14.4 H2 A2 2 0 0 1 0 12.4 V2 A2 2 0 0 1 2 0 Z" fill="#fff"/><path d="M2.2 10.2 Q7.1 13.2 12 10.2" stroke="#3b2a60" stroke-width="1.1" fill="none"/></svg>
<svg class="a" style="left:770.00px;top:458.00px;" width="18" height="16" viewBox="0 0 18 16"><path d="M4.5 10 L11.5 4" stroke="#7a9a2a" stroke-width="2.2"/><circle cx="4" cy="12" r="2.6" fill="#d81e4a"/><circle cx="9.5" cy="11.2" r="2.6" fill="#d81e4a"/><circle cx="13.5" cy="6.2" r="2.6" fill="#d81e4a"/><circle cx="11.5" cy="3" r="1.8" fill="#d81e4a"/><path d="M6 9.5 L10 6" stroke="#e8b030" stroke-width="0.8"/></svg>
</body></html>
